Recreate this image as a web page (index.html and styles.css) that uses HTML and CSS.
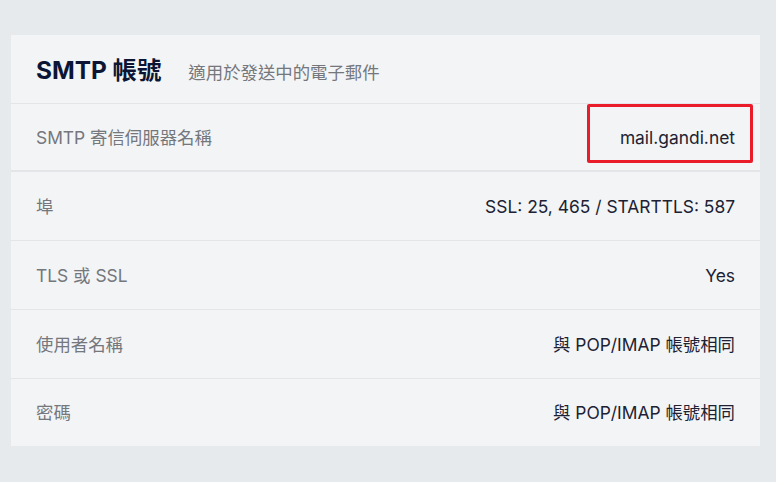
FILE: index.html
```html
<!DOCTYPE html>
<html lang="zh-Hant">
<head>
<meta charset="utf-8">
<link rel="stylesheet" href="styles.css">
</head>
<body>
<section class="card">
  <header class="card-head">
    <h2 class="title">SMTP 帳號</h2>
    <span class="subtitle">適用於發送中的電子郵件</span>
  </header>
  <div class="row row-first">
    <span class="label">SMTP 寄信伺服器名稱</span>
    <span class="value highlight">mail.gandi.net</span>
  </div>
  <div class="row">
    <span class="label">埠</span>
    <span class="value">SSL: 25, 465 / STARTTLS: 587</span>
  </div>
  <div class="row">
    <span class="label">TLS 或 SSL</span>
    <span class="value">Yes</span>
  </div>
  <div class="row">
    <span class="label">使用者名稱</span>
    <span class="value">與 POP/IMAP 帳號相同</span>
  </div>
  <div class="row row-last">
    <span class="label">密碼</span>
    <span class="value">與 POP/IMAP 帳號相同</span>
  </div>
</section>
</body>
</html>
```

FILE: styles.css
```css
html, body {
  margin: 0;
  background: #e7eaed;
}
body {
  padding: 35px 16px 0 11px;
  font-family: Inter, "Noto Sans CJK TC", sans-serif;
}
.card {
  width: 749px;
  background: #f3f4f6;
}
.card-head {
  display: flex;
  align-items: baseline;
  height: 69px;
  box-sizing: border-box;
  padding: 19px 25px 0;
  border-bottom: 1px solid #e3e5e8;
}
.title {
  margin: 0;
  font-size: 24.4px;
  font-weight: 700;
  color: #0c1634;
  line-height: 32px;
}
.subtitle {
  margin-left: 27px;
  font-size: 17.4px;
  color: #74777c;
}
.row {
  position: relative;
  display: flex;
  justify-content: space-between;
  align-items: center;
  height: 69px;
  box-sizing: border-box;
  padding: 1px 25px 0;
  border-bottom: 1px solid #e3e5e8;
  font-size: 17.4px;
  line-height: 26px;
}
.row-first {
  height: 68px;
  border-bottom-width: 2px;
}
.row-last {
  border-bottom: none;
  height: 67px;
}
.label {
  color: #74777c;
}
.value {
  color: #1c2233;
}
.highlight {
  position: relative;
}
.highlight::after {
  content: "";
  position: absolute;
  left: -33px;
  right: -18px;
  top: -21px;
  bottom: -12px;
  border: 3px solid #ea1c2a;
  border-radius: 2px;
}
```
